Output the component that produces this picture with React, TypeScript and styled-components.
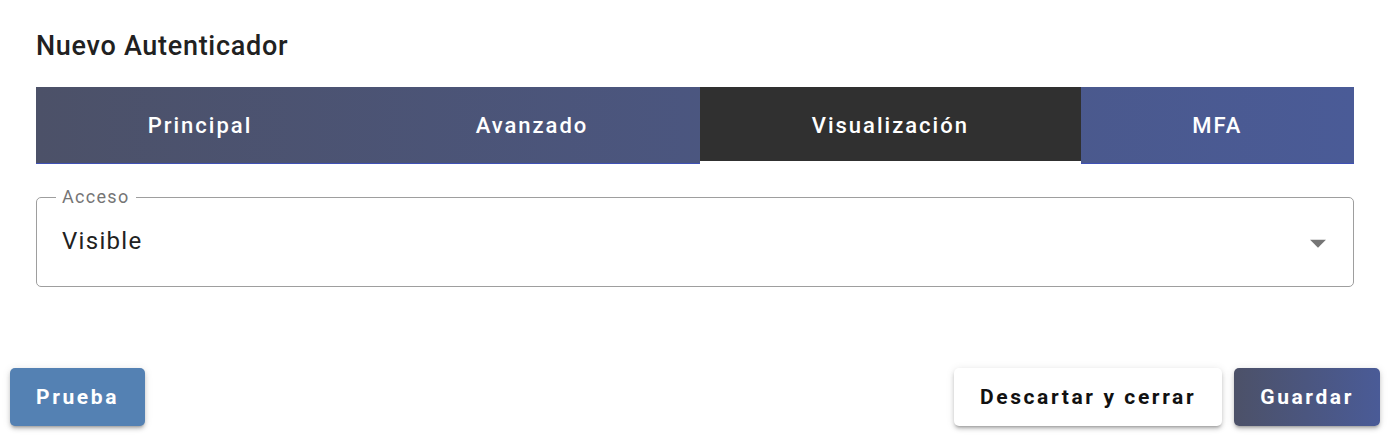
import React from "react";
import styled, { createGlobalStyle } from "styled-components";

const GlobalStyle = createGlobalStyle`
  html, body { margin: 0; padding: 0; background: #fff; }
  body { font-family: Roboto, "Liberation Sans", sans-serif; }
  * { box-sizing: border-box; }
`;

const Page = styled.div`
  width: 1390px;
  height: 438px;
  display: flex;
  flex-direction: column;
  background: #fff;
`;

const Content = styled.div`
  padding: 0 36px;
  display: flex;
  flex-direction: column;
`;

const Title = styled.h2`
  margin: 28px 0 0;
  font-size: 27px;
  font-weight: 500;
  line-height: 36px;
  color: #212121;
  letter-spacing: 0.7px;
`;

const TabBar = styled.div`
  margin-top: 23px;
  display: flex;
  height: 77px;
  background: linear-gradient(90deg, #4c5168 0%, #4a5b97 100%);
`;

const Tab = styled.button<{ $active?: boolean }>`
  flex: 1 1 auto;
  border: none;
  margin: 0;
  padding: 0;
  font-family: Roboto, "Liberation Sans", sans-serif;
  font-size: 22px;
  font-weight: 500;
  letter-spacing: 2px;
  color: #fff;
  cursor: pointer;
  background: ${(p) => (p.$active ? "#303030" : "transparent")};
  border-bottom: ${(p) => (p.$active ? "3px solid #fff" : "1px solid #3f51b5")};
  padding-top: ${(p) => (p.$active ? "2px" : "0")};
`;

const Field = styled.div`
  margin-top: 33px;
  padding: 0 16px 0 25px;
  height: 90px;
  border: 1px solid #9e9e9e;
  border-radius: 5px;
  display: flex;
  align-items: center;
  position: relative;
`;

const Label = styled.span`
  position: absolute;
  top: -12px;
  left: 19px;
  padding: 0 6px;
  background: #fff;
  font-size: 18px;
  line-height: 22px;
  color: #757575;
  letter-spacing: 1.3px;
`;

const Value = styled.span`
  flex: 1;
  font-size: 24px;
  color: #212121;
  letter-spacing: 1.3px;
  margin-top: -2px;
`;

const Arrow = styled.svg`
  width: 38px;
  height: 38px;
  fill: #757575;
  margin-top: 2px;
`;

const Footer = styled.div`
  margin-top: auto;
  padding: 0 10px 12px;
  display: flex;
  align-items: center;
`;

const Spacer = styled.div`
  flex: 1;
`;

const Button = styled.button<{ $variant: "test" | "plain" | "primary" }>`
  height: 58px;
  border: none;
  border-radius: 5px;
  padding: 0 26px;
  font-family: Roboto, "Liberation Sans", sans-serif;
  font-size: 21px;
  font-weight: 700;
  letter-spacing: 2.6px;
  cursor: pointer;
  box-shadow: 0 3px 3px -2px rgba(0, 0, 0, 0.25), 0 3px 4px 0 rgba(0, 0, 0, 0.16), 0 1px 8px 0 rgba(0, 0, 0, 0.1);
  color: ${(p) => (p.$variant === "plain" ? "#111" : "#fff")};
  background: ${(p) =>
    p.$variant === "test"
      ? "#5481b3"
      : p.$variant === "plain"
      ? "#fff"
      : "linear-gradient(90deg, #4c5168 0%, #4a5b97 100%)"};
  margin-left: ${(p) => (p.$variant === "primary" ? "12px" : "0")};
`;

export default function App() {
  return (
    <>
      <GlobalStyle />
      <Page>
        <Content>
          <Title>Nuevo Autenticador</Title>
          <TabBar>
            <Tab>Principal</Tab>
            <Tab>Avanzado</Tab>
            <Tab $active>Visualización</Tab>
            <Tab>MFA</Tab>
          </TabBar>
          <Field>
            <Label>Acceso</Label>
            <Value>Visible</Value>
            <Arrow viewBox="0 0 24 24">
              <path d="M7 10l5 5 5-5z" />
            </Arrow>
          </Field>
        </Content>
        <Footer>
          <Button $variant="test">Prueba</Button>
          <Spacer />
          <Button $variant="plain">Descartar y cerrar</Button>
          <Button $variant="primary">Guardar</Button>
        </Footer>
      </Page>
    </>
  );
}
